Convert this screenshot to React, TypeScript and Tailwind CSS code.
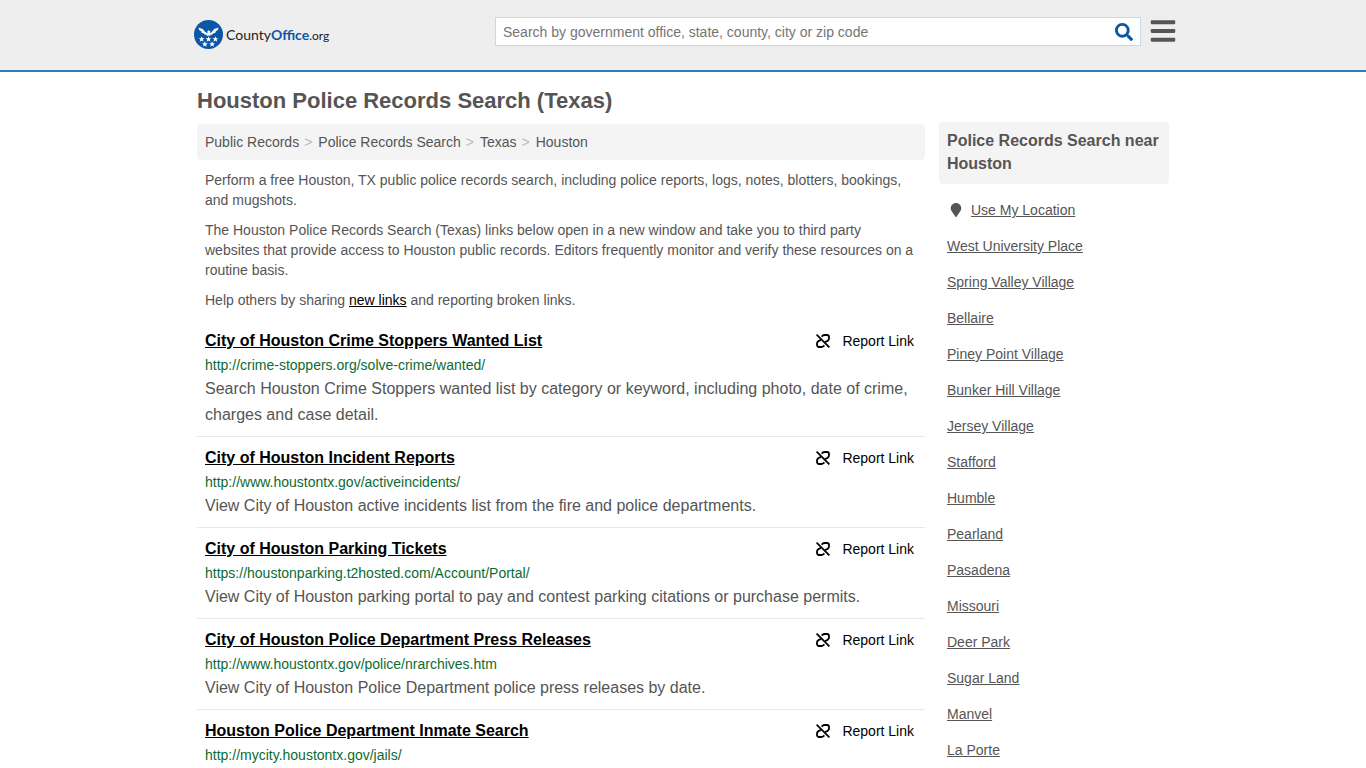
import { FaBars, FaMapMarker, FaSearch } from "react-icons/fa";

const crumbs = ["Public Records", "Police Records Search", "Texas", "Houston"];

const resources = [
  {
    title: "City of Houston Crime Stoppers Wanted List",
    url: "http://crime-stoppers.org/solve-crime/wanted/",
    description:
      "Search Houston Crime Stoppers wanted list by category or keyword, including photo, date of crime, charges and case detail.",
  },
  {
    title: "City of Houston Incident Reports",
    url: "http://www.houstontx.gov/activeincidents/",
    description:
      "View City of Houston active incidents list from the fire and police departments.",
  },
  {
    title: "City of Houston Parking Tickets",
    url: "https://houstonparking.t2hosted.com/Account/Portal/",
    description:
      "View City of Houston parking portal to pay and contest parking citations or purchase permits.",
  },
  {
    title: "City of Houston Police Department Press Releases",
    url: "http://www.houstontx.gov/police/nrarchives.htm",
    description: "View City of Houston Police Department police press releases by date.",
  },
  {
    title: "Houston Police Department Inmate Search",
    url: "http://mycity.houstontx.gov/jails/",
    description: "",
  },
];

const nearby = [
  "West University Place",
  "Spring Valley Village",
  "Bellaire",
  "Piney Point Village",
  "Bunker Hill Village",
  "Jersey Village",
  "Stafford",
  "Humble",
  "Pearland",
  "Pasadena",
  "Missouri",
  "Deer Park",
  "Sugar Land",
  "Manvel",
  "La Porte",
];

const STAR = "M0-4.2 1.1-1.300H4.100L1.700.5 2.600 3.500 0 1.700-2.600 3.500-1.700.5-4.100-1.300H-1.100Z";
const stars = [
  [10.5, 26.5],
  [20, 26.5],
  [29.5, 26.5],
  [15, 33.5],
  [25, 33.5],
];

function Logo() {
  return (
    <a href="#" className="flex items-center gap-[3px] text-[#222]">
      <svg viewBox="0 0 40 40" className="h-[29px] w-[29px]" aria-hidden="true">
        <circle cx="20" cy="20" r="20" fill="#0b56a5" />
        <g fill="#fff">
          <path d="M6 10.500 12 12.500 16 17 18.500 18.500 18.500 15.500 20 14.200 22.500 15.500 21.500 18.500 24 17 28 12.500 34 10.500 32.500 14 30 15.500 29.500 17.500 26.500 18.500 24.500 20.500 22 20.500 23 22 20 21.500 17 22 18 20.500 15.500 20.500 13.500 18.500 10.500 17.500 10 15.500 7.500 14Z" />
          {stars.map(([x, y]) => (
            <path key={`${x}-${y}`} d={STAR} transform={`translate(${x} ${y})`} />
          ))}
        </g>
      </svg>
      <span className="font-[Lato,sans-serif] text-sm leading-5">
        County<span className="font-bold text-[#0b56a5]">Office</span>
        <span className="text-xs">.org</span>
      </span>
    </a>
  );
}

function UnlinkIcon() {
  return (
    <svg
      viewBox="0 0 14 14"
      className="h-3.5 w-3.5"
      fill="none"
      stroke="currentColor"
      strokeWidth="1.8"
      aria-hidden="true"
    >
      <path d="M.6.6 13.400 13.400" />
      <path d="M5.600 2.600 6.400 1.900Q7.300 1 8.600 1H11a2 2 0 0 1 2 2v1.600Q13 5.600 12.200 6.300L11 7.300Q10.200 7.900 8.900 7.900" />
      <path d="M8.400 11.400 7.600 12.100Q6.700 13 5.400 13H3a2 2 0 0 1-2-2V9.400Q1 8.400 1.800 7.700L3 6.700Q3.800 6.100 5.100 6.100" />
    </svg>
  );
}

function Header() {
  return (
    <header className="h-[72px] border-b-2 border-[#337ab7] bg-[#eee] px-4 pt-4">
      <div className="mx-auto flex max-w-[978px] items-start">
        <div className="w-[301px] shrink pt-1">
          <Logo />
        </div>
        <form className="mt-px flex h-[29px] min-w-0 flex-1 items-center border border-[#c5d9ea] bg-white pr-[7px]">
          <input
            type="search"
            aria-label="Search"
            placeholder="Search by government office, state, county, city or zip code"
            className="min-w-0 flex-1 px-[7px] text-sm placeholder:text-[#757575] focus:outline-none"
          />
          <button type="button" aria-label="Submit search">
            <FaSearch className="h-[18px] w-[18px] text-[#0b56a5]" />
          </button>
        </form>
        <button type="button" aria-label="Menu" className="mt-px -mr-[5px] ml-2 text-[#555]">
          <FaBars className="h-7 w-7" />
        </button>
      </div>
    </header>
  );
}

function Resource({ title, url, description }: (typeof resources)[number]) {
  return (
    <li className="border-b border-[#e8e8e8] px-2 py-2">
      <div className="flex items-center justify-between">
        <h2 className="text-base leading-[26px] font-bold text-black">
          <a href="#" className="underline">
            {title}
          </a>
        </h2>
        <button type="button" className="mr-[3px] flex items-center gap-3 text-sm text-black">
          <UnlinkIcon />
          Report Link
        </button>
      </div>
      <p className="text-sm leading-[22px] text-[#0b6b33]">{url}</p>
      <p className="text-base leading-[26px]">{description}</p>
    </li>
  );
}

function Sidebar() {
  return (
    <aside className="w-[230px] shrink-0 pt-[50px]">
      <h2 className="rounded bg-[#f4f4f4] px-2 pt-[7px] pb-[9px] text-base leading-[23px] font-bold">
        Police Records Search near Houston
      </h2>
      <ul className="mt-2 px-2 text-sm">
        <li className="flex h-9 items-center gap-2">
          <FaMapMarker className="ml-0.5 h-3.5 w-3.5" />
          <a href="#" className="underline">
            Use My Location
          </a>
        </li>
        {nearby.map((city) => (
          <li key={city} className="flex h-9 items-center">
            <a href="#" className="underline">
              {city}
            </a>
          </li>
        ))}
      </ul>
    </aside>
  );
}

export default function App() {
  return (
    <div className="h-screen overflow-hidden bg-white font-['Liberation_Sans',Arial,sans-serif] text-[#555]">
      <Header />
      <div className="mx-auto flex max-w-[972px] gap-3.5">
        <main className="min-w-0 flex-1 pt-3">
          <h1 className="pt-px text-[22px] leading-8 font-bold">
            Houston Police Records Search (Texas)
          </h1>
          <nav aria-label="Breadcrumb" className="mt-[7px] rounded bg-[#f4f4f4] px-2">
            <ol className="flex h-9 items-center text-sm">
              {crumbs.map((crumb, i) => (
                <li key={crumb}>
                  {i > 0 && <span className="pr-1.5 pl-[5px] text-[#bbb]">&gt;</span>}
                  <a href="#">{crumb}</a>
                </li>
              ))}
            </ol>
          </nav>
          <div className="mt-2.5 flex flex-col gap-2.5 px-2 text-sm">
            <p>
              Perform a free Houston, TX public police records search, including police reports,
              logs, notes, blotters, bookings, and mugshots.
            </p>
            <p>
              The Houston Police Records Search (Texas) links below open in a new window and take
              you to third party websites that provide access to Houston public records. Editors
              frequently monitor and verify these resources on a routine basis.
            </p>
            <p>
              Help others by sharing{" "}
              <a href="#" className="text-black underline">
                new links
              </a>{" "}
              and reporting broken links.
            </p>
          </div>
          <ul className="mt-2.5">
            {resources.map((resource) => (
              <Resource key={resource.title} {...resource} />
            ))}
          </ul>
        </main>
        <Sidebar />
      </div>
    </div>
  );
}
